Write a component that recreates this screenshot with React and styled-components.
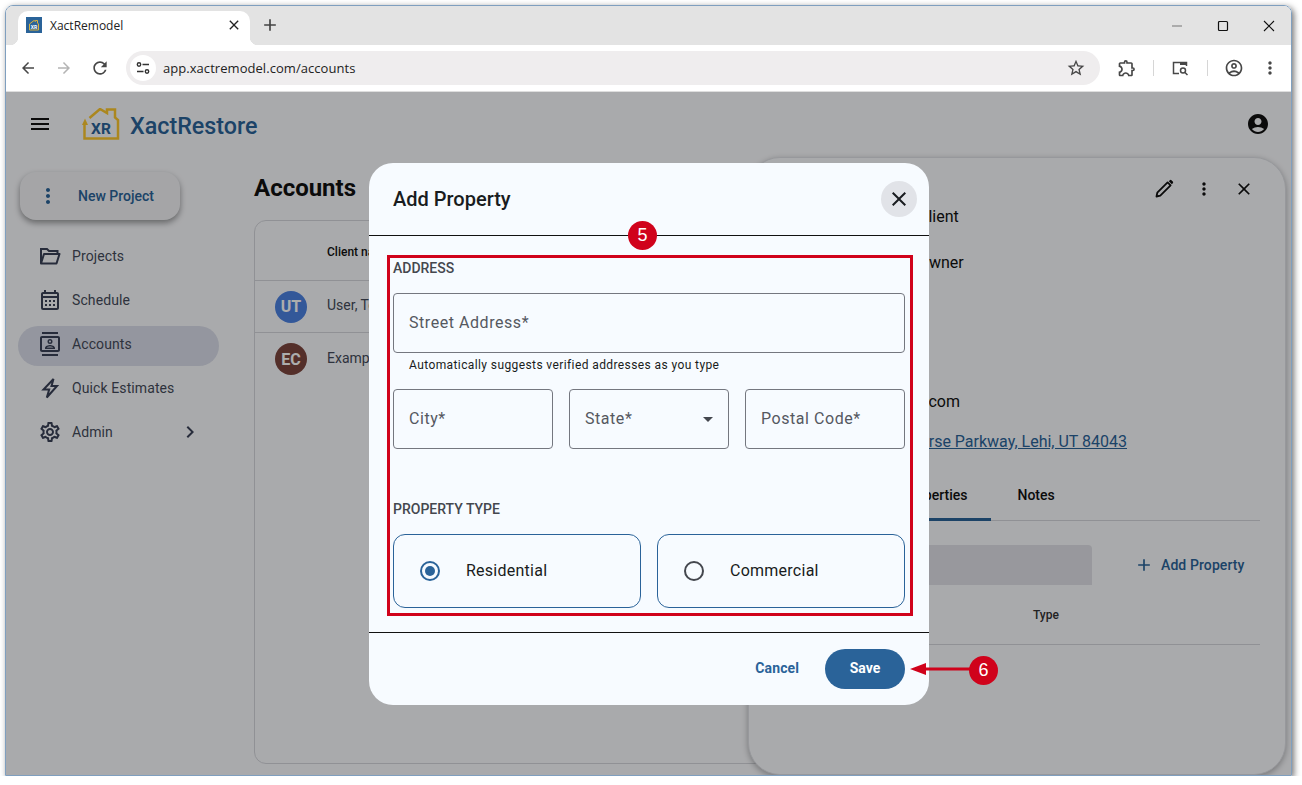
import React from "react"
import styled, { createGlobalStyle } from "styled-components"
import {
  MdAccountCircle, MdAdd, MdArrowBack, MdArrowDropDown, MdArrowForward, MdChevronRight, MdClose, MdMenu, MdMoreVert,
  MdOutlineAccountCircle, MdOutlineContacts, MdOutlineExtension, MdOutlineSettings,
  MdRefresh, MdStarBorder, MdOutlineCalendarMonth,
} from "react-icons/md"

const primary = "#2a6399"
const red = "#d0021b"
const roboto = `Roboto, "Liberation Sans", sans-serif`
const chromeFont = `"Open Sans", "Noto Sans", sans-serif`

const GlobalStyle = createGlobalStyle`
  html, body { margin: 0; padding: 0; background: #fff; overflow: hidden; }
  * { box-sizing: border-box; }
`

const Frame = styled.div`
  position: relative;
  margin: 5px 0 0 5px;
  width: 1287px;
  height: 771px;
  border: 1px solid #7f9fbf;
  border-radius: 8px 8px 0 0;
  box-shadow: 2px 2px 6px rgba(0, 0, 0, 0.55);
  display: flex;
  flex-direction: column;
  overflow: hidden;
  font-family: ${roboto};
`

const TabStrip = styled.div`
  height: 39px;
  flex: none;
  background: #e3e3e3;
  display: flex;
  align-items: flex-end;
  padding-left: 12px;
`

const Tab = styled.div`
  position: relative;
  width: 232px;
  height: 34px;
  background: #fff;
  border-radius: 10px 10px 0 0;
  display: flex;
  align-items: center;
  padding: 0 8px 6px;
  font: 12px ${chromeFont};
  color: #222;

  &::before, &::after {
    content: "";
    position: absolute;
    bottom: 0;
    width: 8px;
    height: 8px;
  }
  &::before { left: -8px; background: radial-gradient(circle at 0 0, #e3e3e3 8px, #fff 8.5px); }
  &::after { right: -8px; background: radial-gradient(circle at 100% 0, #e3e3e3 8px, #fff 8.5px); }
`

const Favicon = styled.svg`
  width: 16px;
  height: 16px;
  margin-right: 8px;
  flex: none;
`

const TabTitle = styled.span`
  flex: 1;
`

const NewTab = styled.div`
  width: 24px;
  height: 24px;
  margin: 0 0 8px 8px;
  color: #444;
  display: flex;
  align-items: center;
  justify-content: center;
`

const WindowButtons = styled.div`
  margin: 0 -1px 0 auto;
  align-self: flex-start;
  display: flex;
  height: 39px;
  align-items: center;
  color: #222;
`

const WindowButton = styled.div`
  width: 46px;
  display: flex;
  justify-content: center;
  align-items: center;
`

const Toolbar = styled.div`
  height: 47px;
  flex: none;
  background: #fff;
  border-bottom: 1px solid #dedede;
  display: flex;
  align-items: center;
  padding: 0 0 1px 4px;
  color: #474747;
`

const ToolButton = styled.div`
  width: ${(p) => p.$width || 36}px;
  height: 36px;
  flex: none;
  display: flex;
  align-items: center;
  justify-content: center;
  color: ${(p) => (p.$faded ? "#b4b4b4" : "inherit")};
`

const Omnibox = styled.div`
  width: 974px;
  height: 34px;
  margin: 0 9px 0 8px;
  background: #efedee;
  border-radius: 17px;
  display: flex;
  align-items: center;
  padding: 0 14px 0 4px;
`

const SiteChip = styled.div`
  width: 26px;
  height: 26px;
  border-radius: 50%;
  background: #fff;
  display: flex;
  align-items: center;
  justify-content: center;
  color: #333;
`

const UrlText = styled.span`
  flex: 1;
  margin-left: 7px;
  font: 13px ${chromeFont};
  letter-spacing: 0.05px;
  color: #222;
`

const ToolSep = styled.div`
  width: 1px;
  height: 16px;
  background: #d6d6d6;
  flex: none;
`

const AppArea = styled.div`
  position: relative;
  flex: 1;
  min-height: 0;
  background: #fafbfe;
  display: flex;
  flex-direction: column;
`

const AppHeader = styled.div`
  height: 64px;
  flex: none;
  display: flex;
  align-items: center;
  padding: 0 21px 0 22px;
  color: #111;
`

const Logo = styled.svg`
  width: 38px;
  height: 33px;
  margin-left: 30px;
`

const Brand = styled.div`
  margin-left: 10px;
  padding-top: 3px;
  font-size: 23.3px;
  font-weight: 500;
  color: ${primary};
`

const HeaderAccount = styled.div`
  margin-left: auto;
  display: flex;
`

const Body = styled.div`
  flex: 1;
  min-height: 0;
  display: flex;
`

const Sidebar = styled.nav`
  width: 248px;
  flex: none;
  padding-top: 16px;
`

const NewProject = styled.div`
  width: 160px;
  height: 48px;
  margin-left: 14px;
  border-radius: 16px;
  background: #f3f4f7;
  box-shadow: 0 3px 6px rgba(0, 0, 0, 0.4);
  display: flex;
  align-items: center;
  padding-left: 16px;
  gap: 18px;
  color: ${primary};
  font-size: 14px;
  font-weight: 500;
`

const NavList = styled.div`
  margin: 18px 0 0 12px;
  width: 201px;
  display: flex;
  flex-direction: column;
  gap: 4px;
`

const NavItem = styled.div`
  height: 40px;
  border-radius: 20px;
  display: flex;
  align-items: center;
  gap: 10px;
  padding: 0 17px 4px 20px;
  font-size: 14px;
  letter-spacing: 0.1px;
  color: #454b5a;
  background: ${(p) => (p.$active ? "#dadeea" : "transparent")};
  svg { flex: none; color: #3a4258; }
`

const NavChevron = styled.span`
  margin-left: auto;
  display: flex;
`

const Content = styled.main`
  flex: 1;
  padding: 16px 10px 11px 0;
  display: flex;
  flex-direction: column;
`

const PageTitle = styled.h1`
  margin: 0 0 16px;
  font-size: 24px;
  line-height: 32px;
  font-weight: 700;
  color: #111;
`

const TableCard = styled.div`
  flex: 1;
  border: 1px solid #d4d6dc;
  border-radius: 12px;
`

const TableHead = styled.div`
  height: 60px;
  border-bottom: 1px solid #d4d6dc;
  display: flex;
  align-items: center;
  padding: 3px 0 0 72px;
  font-size: 12px;
  font-weight: 500;
  color: #111;
`

const TableRow = styled.div`
  height: ${(p) => p.$height}px;
  border-bottom: ${(p) => (p.$last ? "none" : "1px solid #d4d6dc")};
  display: flex;
  align-items: center;
  padding-left: 20px;
  gap: 20px;
  font-size: 14px;
  color: #454b5a;
`

const RowName = styled.span`
  margin-bottom: 3px;
`

const Avatar = styled.div`
  width: 32px;
  height: 32px;
  border-radius: 50%;
  background: ${(p) => p.$bg};
  color: #fff;
  display: flex;
  align-items: center;
  justify-content: center;
  font-size: 16px;
  font-weight: 700;
`

const DetailPanel = styled.aside`
  position: absolute;
  top: 65px;
  right: 5px;
  bottom: 0;
  width: 538px;
  background: #fafbfe;
  border: 1px solid #dfe1e6;
  border-radius: 32px;
  box-shadow: 0 2px 6px rgba(0, 0, 0, 0.3);
  padding: 21px 25px 0 31px;
`

const PanelActions = styled.div`
  display: flex;
  justify-content: flex-end;
  gap: 20px;
  padding-right: 6px;
  color: #111;
`

const DetailRow = styled.div`
  display: flex;
  margin-top: ${(p) => p.$top}px;
  font-size: 16px;
  line-height: 24px;
  color: #111;
`

const DetailLabel = styled.span`
  width: 138px;
  flex: none;
`

const DetailLine = styled.div`
  width: ${(p) => p.$width}px;
  margin-top: ${(p) => p.$top}px;
  font-size: 16px;
  line-height: 24px;
  text-align: right;
  white-space: nowrap;
  color: #111;
`

const AddressLink = styled.span`
  color: ${primary};
  text-decoration: underline;
`

const TabBar = styled.div`
  margin-top: 19px;
  height: 48px;
  display: flex;
  border-bottom: 1px solid #d4d6dc;
`

const PanelTab = styled.div`
  padding: 0 24px 2px;
  margin-left: ${(p) => p.$left || 0}px;
  height: 48px;
  display: flex;
  align-items: center;
  font-size: 14px;
  font-weight: 500;
  color: #111;
  border-bottom: 3px solid ${(p) => (p.$active ? primary : "transparent")};
`

const PanelTools = styled.div`
  margin-top: 24px;
  height: 40px;
  display: flex;
  align-items: center;
`

const SearchBox = styled.div`
  width: 312px;
  height: 40px;
  background: #e0e1e7;
  border-radius: 4px 4px 0 0;
`

const AddButton = styled.div`
  margin-left: 42px;
  display: flex;
  align-items: center;
  gap: 7px;
  color: ${primary};
  font-size: 14px;
  font-weight: 500;
  letter-spacing: 0.1px;
`

const PanelTableHead = styled.div`
  height: 60px;
  border-bottom: 1px solid #d4d6dc;
  display: flex;
  align-items: center;
  padding-left: 253px;
  font-size: 12px;
  font-weight: 500;
  color: #333;
`

const Scrim = styled.div`
  position: absolute;
  inset: 0;
  background: rgba(0, 0, 0, 0.32);
  display: flex;
  align-items: center;
  justify-content: center;
`

const Modal = styled.div`
  width: 560px;
  height: 542px;
  margin-left: 1px;
  background: #f7fbff;
  border-radius: 24px;
  display: flex;
  flex-direction: column;
`

const ModalHeader = styled.div`
  height: 73px;
  flex: none;
  border-bottom: 1px solid #111;
  display: flex;
  align-items: center;
  justify-content: space-between;
  padding: 0 12px 0 24px;
`

const ModalTitle = styled.h2`
  margin: 0;
  font-size: 20px;
  font-weight: 500;
  color: #191c20;
`

const CloseButton = styled.div`
  width: 36px;
  height: 36px;
  border-radius: 50%;
  background: #e1e3e8;
  color: #191c20;
  display: flex;
  align-items: center;
  justify-content: center;
`

const ModalBody = styled.div`
  flex: 1;
  padding: 24px 24px 0;
  display: flex;
  flex-direction: column;
`

const SectionLabel = styled.div`
  font-size: 14px;
  line-height: 16px;
  font-weight: 500;
  color: #44474e;
  margin-top: ${(p) => p.$top || 0}px;
`

const Field = styled.div`
  height: 60px;
  border: 1px solid #74777f;
  border-radius: 4px;
  display: flex;
  align-items: center;
  justify-content: space-between;
  padding: 0 15px;
  font-size: 16px;
  letter-spacing: 0.55px;
  color: #55585f;
  margin-top: ${(p) => p.$top || 0}px;
`

const HelperText = styled.div`
  margin: 4px 0 0 16px;
  font-size: 12px;
  line-height: 16px;
  letter-spacing: 0.4px;
  color: #191c20;
`

const FieldRow = styled.div`
  display: grid;
  grid-template-columns: repeat(3, 1fr);
  gap: 16px;
  margin-top: 16px;
`

const StateArrow = styled.span`
  display: flex;
  margin: 0 -7px 0 0;
  color: #44474e;
`

const RadioRow = styled.div`
  display: grid;
  grid-template-columns: 1fr 1fr;
  gap: 16px;
  margin-top: 17px;
`

const RadioCard = styled.label`
  height: 74px;
  border: 1px solid ${primary};
  border-radius: 12px;
  display: flex;
  align-items: center;
  padding: 0 0 0 26px;
  gap: 26px;
  font-size: 16px;
  letter-spacing: 0.25px;
  color: #191c20;
`

const RadioDot = styled.span`
  width: 20px;
  height: 20px;
  border-radius: 50%;
  border: 2px solid ${(p) => (p.$checked ? primary : "#44474e")};
  display: flex;
  align-items: center;
  justify-content: center;

  &::after {
    content: "";
    width: 10px;
    height: 10px;
    border-radius: 50%;
    background: ${(p) => (p.$checked ? primary : "transparent")};
  }
`

const ModalFooter = styled.div`
  height: 73px;
  flex: none;
  border-top: 1px solid #111;
  display: flex;
  align-items: center;
  justify-content: flex-end;
  gap: 26px;
  padding: 0 24px;
  font-size: 14px;
  font-weight: 700;
`

const CancelButton = styled.div`
  color: ${primary};
  margin-bottom: 2px;
  letter-spacing: 0.1px;
`

const SaveButton = styled.div`
  width: 80px;
  height: 40px;
  border-radius: 20px;
  background: ${primary};
  color: #fff;
  padding-bottom: 2px;
  display: flex;
  align-items: center;
  justify-content: center;
`

const Callout = styled.div`
  position: absolute;
  left: ${(p) => p.$left}px;
  top: ${(p) => p.$top}px;
  width: 526px;
  height: 361px;
  border: 3px solid ${red};
`

const Badge = styled.div`
  position: absolute;
  left: ${(p) => p.$left}px;
  top: ${(p) => p.$top}px;
  width: 29px;
  height: 29px;
  border-radius: 50%;
  background: ${red};
  color: #fff;
  font: 18px "Liberation Sans", sans-serif;
  display: flex;
  align-items: center;
  justify-content: center;
`

const Arrow = styled.svg`
  position: absolute;
  left: 904px;
  top: 655px;
  width: 62px;
  height: 16px;
`

const navItems = [
  {
    label: "Projects",
    icon: (
      <svg width="24" height="24" viewBox="0 0 24 24" fill="none" stroke="currentColor" strokeWidth="2">
        <path d="M3 19V5h6l2 2h8.500v3" />
        <path d="M3 19.500h15.500l3-9.500H6z" strokeLinejoin="round" />
      </svg>
    ),
  },
  { label: "Schedule", icon: <MdOutlineCalendarMonth size={24} /> },
  { label: "Accounts", icon: <MdOutlineContacts size={24} />, active: true },
  {
    label: "Quick Estimates",
    icon: (
      <svg width="24" height="24" viewBox="0 0 24 24" fill="none" stroke="currentColor" strokeWidth="2">
        <path d="M15.500 3 5.500 13.500h5.700L8.800 21.500 19 10h-5.500z" />
      </svg>
    ),
  },
  { label: "Admin", icon: <MdOutlineSettings size={24} />, chevron: true },
]

function App() {
  return (
    <>
      <GlobalStyle />
      <Frame>
        <TabStrip>
          <Tab>
            <Favicon viewBox="0 0 16 16">
              <rect width="16" height="16" fill="#2a6399" />
              <path d="M3.500 13V7L8 3.500l1.500 1V3.500h2V6l1 1v6z" fill="none" stroke="#d9b23c" strokeWidth="1" />
              <text x="8" y="11.500" textAnchor="middle" fontSize="5" fontWeight="700" fontFamily="Roboto" fill="#fff">XR</text>
            </Favicon>
            <TabTitle>XactRemodel</TabTitle>
            <MdClose size={16} />
          </Tab>
          <NewTab><MdAdd size={20} /></NewTab>
          <WindowButtons>
            <WindowButton>
              <svg width="12" height="12" viewBox="0 0 12 12"><path d="M1 6h10" stroke="#777" strokeWidth="1.200" /></svg>
            </WindowButton>
            <WindowButton>
              <svg width="12" height="12" viewBox="0 0 12 12" fill="none"><rect x="1.500" y="1.500" width="9" height="9" rx="1" stroke="#111" strokeWidth="1.200" /></svg>
            </WindowButton>
            <WindowButton>
              <svg width="12" height="12" viewBox="0 0 12 12"><path d="M1 1l10 10M11 1 1 11" stroke="#111" strokeWidth="1.100" /></svg>
            </WindowButton>
          </WindowButtons>
        </TabStrip>

        <Toolbar>
          <ToolButton><MdArrowBack size={18} /></ToolButton>
          <ToolButton $faded><MdArrowForward size={18} /></ToolButton>
          <ToolButton><MdRefresh size={20} /></ToolButton>
          <Omnibox>
            <SiteChip>
              <svg width="16" height="16" viewBox="0 0 16 16" fill="none" stroke="currentColor" strokeWidth="1.400">
                <circle cx="4" cy="4.500" r="1.700" />
                <path d="M7.500 4.500H14M2 11.500h6.500" />
                <circle cx="12" cy="11.500" r="1.700" />
              </svg>
            </SiteChip>
            <UrlText>app.xactremodel.com/accounts</UrlText>
            <MdStarBorder size={20} />
          </Omnibox>
          <ToolButton><MdOutlineExtension size={20} /></ToolButton>
          <ToolButton $width={17}><ToolSep /></ToolButton>
          <ToolButton>
            <svg width="20" height="20" viewBox="0 0 20 20" fill="none" stroke="currentColor" strokeWidth="1.500">
              <path d="M9 15.500H3.500v-11h13V8" />
              <path d="M10 4h7v3h-7z" fill="currentColor" stroke="none" />
              <circle cx="13" cy="12.500" r="2.500" />
              <path d="m15 14.500 2.500 2.500" />
            </svg>
          </ToolButton>
          <ToolButton $width={18}><ToolSep /></ToolButton>
          <ToolButton><MdOutlineAccountCircle size={20} /></ToolButton>
          <ToolButton><MdMoreVert size={20} /></ToolButton>
        </Toolbar>

        <AppArea>
          <AppHeader>
            <MdMenu size={24} />
            <Logo viewBox="0 0 38 33">
              <path d="M2.500 15v15.500H36V12l-3-2.500v-8h-8V5L18 1 7.500 10" fill="none" stroke="#fdc82f" strokeWidth="2.500" />
              <path d="M3 10.500 0 17h6z" fill="#fdc82f" />
              <text x="19" y="26" textAnchor="middle" fontSize="15.500" fontWeight="700" fontFamily="Roboto" fill={primary}>XR</text>
            </Logo>
            <Brand>XactRestore</Brand>
            <HeaderAccount><MdAccountCircle size={24} /></HeaderAccount>
          </AppHeader>

          <Body>
            <Sidebar>
              <NewProject>
                <MdMoreVert size={24} />
                New Project
              </NewProject>
              <NavList>
                {navItems.map((item) => (
                  <NavItem key={item.label} $active={item.active}>
                    {item.icon}
                    {item.label}
                    {item.chevron && <NavChevron><MdChevronRight size={24} /></NavChevron>}
                  </NavItem>
                ))}
              </NavList>
            </Sidebar>

            <Content>
              <PageTitle>Accounts</PageTitle>
              <TableCard>
                <TableHead>Client name</TableHead>
                <TableRow $height={52}><Avatar $bg="#4c82e2">UT</Avatar><RowName>User, Test</RowName></TableRow>
                <TableRow $height={52} $last><Avatar $bg="#7d463e">EC</Avatar><RowName>Example Client</RowName></TableRow>
              </TableCard>
            </Content>
          </Body>

          <DetailPanel>
            <PanelActions>
              <svg width="20" height="20" viewBox="2 2 20 20" fill="none" stroke="currentColor" strokeWidth="1.800">
                <path d="M4.500 19.500l.8-3.800L15.600 5.400l3 3L8.300 18.700z" strokeLinejoin="round" />
                <path d="M16.800 4.200l1-1a1.200 1.200 0 0 1 1.700 0l1.300 1.300a1.200 1.200 0 0 1 0 1.700l-1 1z" fill="currentColor" stroke="none" />
              </svg>
              <MdMoreVert size={20} />
              <MdClose size={20} />
            </PanelActions>
            <DetailRow $top={6}><DetailLabel>Type</DetailLabel>Client</DetailRow>
            <DetailRow $top={22}><DetailLabel>Role</DetailLabel>Owner</DetailRow>
            <DetailLine $top={115} $width={180}>ut@test.com</DetailLine>
            <DetailLine $top={16} $width={347}><AddressLink>3300 N Traverse Parkway, Lehi, UT 84043</AddressLink></DetailLine>
            <TabBar>
              <PanelTab>Details</PanelTab>
              <PanelTab $active $left={7}>Properties</PanelTab>
              <PanelTab $left={2}>Notes</PanelTab>
            </TabBar>
            <PanelTools>
              <SearchBox />
              <AddButton><MdAdd size={20} />Add Property</AddButton>
            </PanelTools>
            <PanelTableHead>Type</PanelTableHead>
          </DetailPanel>

          <Scrim>
            <Modal>
              <ModalHeader>
                <ModalTitle>Add Property</ModalTitle>
                <CloseButton><MdClose size={24} /></CloseButton>
              </ModalHeader>
              <ModalBody>
                <SectionLabel>ADDRESS</SectionLabel>
                <Field $top={17}>Street Address*</Field>
                <HelperText>Automatically suggests verified addresses as you type</HelperText>
                <FieldRow>
                  <Field>City*</Field>
                  <Field>State*<StateArrow><MdArrowDropDown size={24} /></StateArrow></Field>
                  <Field>Postal Code*</Field>
                </FieldRow>
                <SectionLabel $top={52}>PROPERTY TYPE</SectionLabel>
                <RadioRow>
                  <RadioCard><RadioDot $checked />Residential</RadioCard>
                  <RadioCard><RadioDot />Commercial</RadioCard>
                </RadioRow>
              </ModalBody>
              <ModalFooter>
                <CancelButton>Cancel</CancelButton>
                <SaveButton>Save</SaveButton>
              </ModalFooter>
            </Modal>
          </Scrim>
        </AppArea>

        <Callout $left={381} $top={249} />
        <Badge $left={622} $top={215}>5</Badge>
        <Arrow viewBox="0 0 62 16">
          <path d="M0 8 16 2v4.500h46v3H16V14z" fill={red} />
        </Arrow>
        <Badge $left={963} $top={650}>6</Badge>
      </Frame>
    </>
  )
}

export default App
